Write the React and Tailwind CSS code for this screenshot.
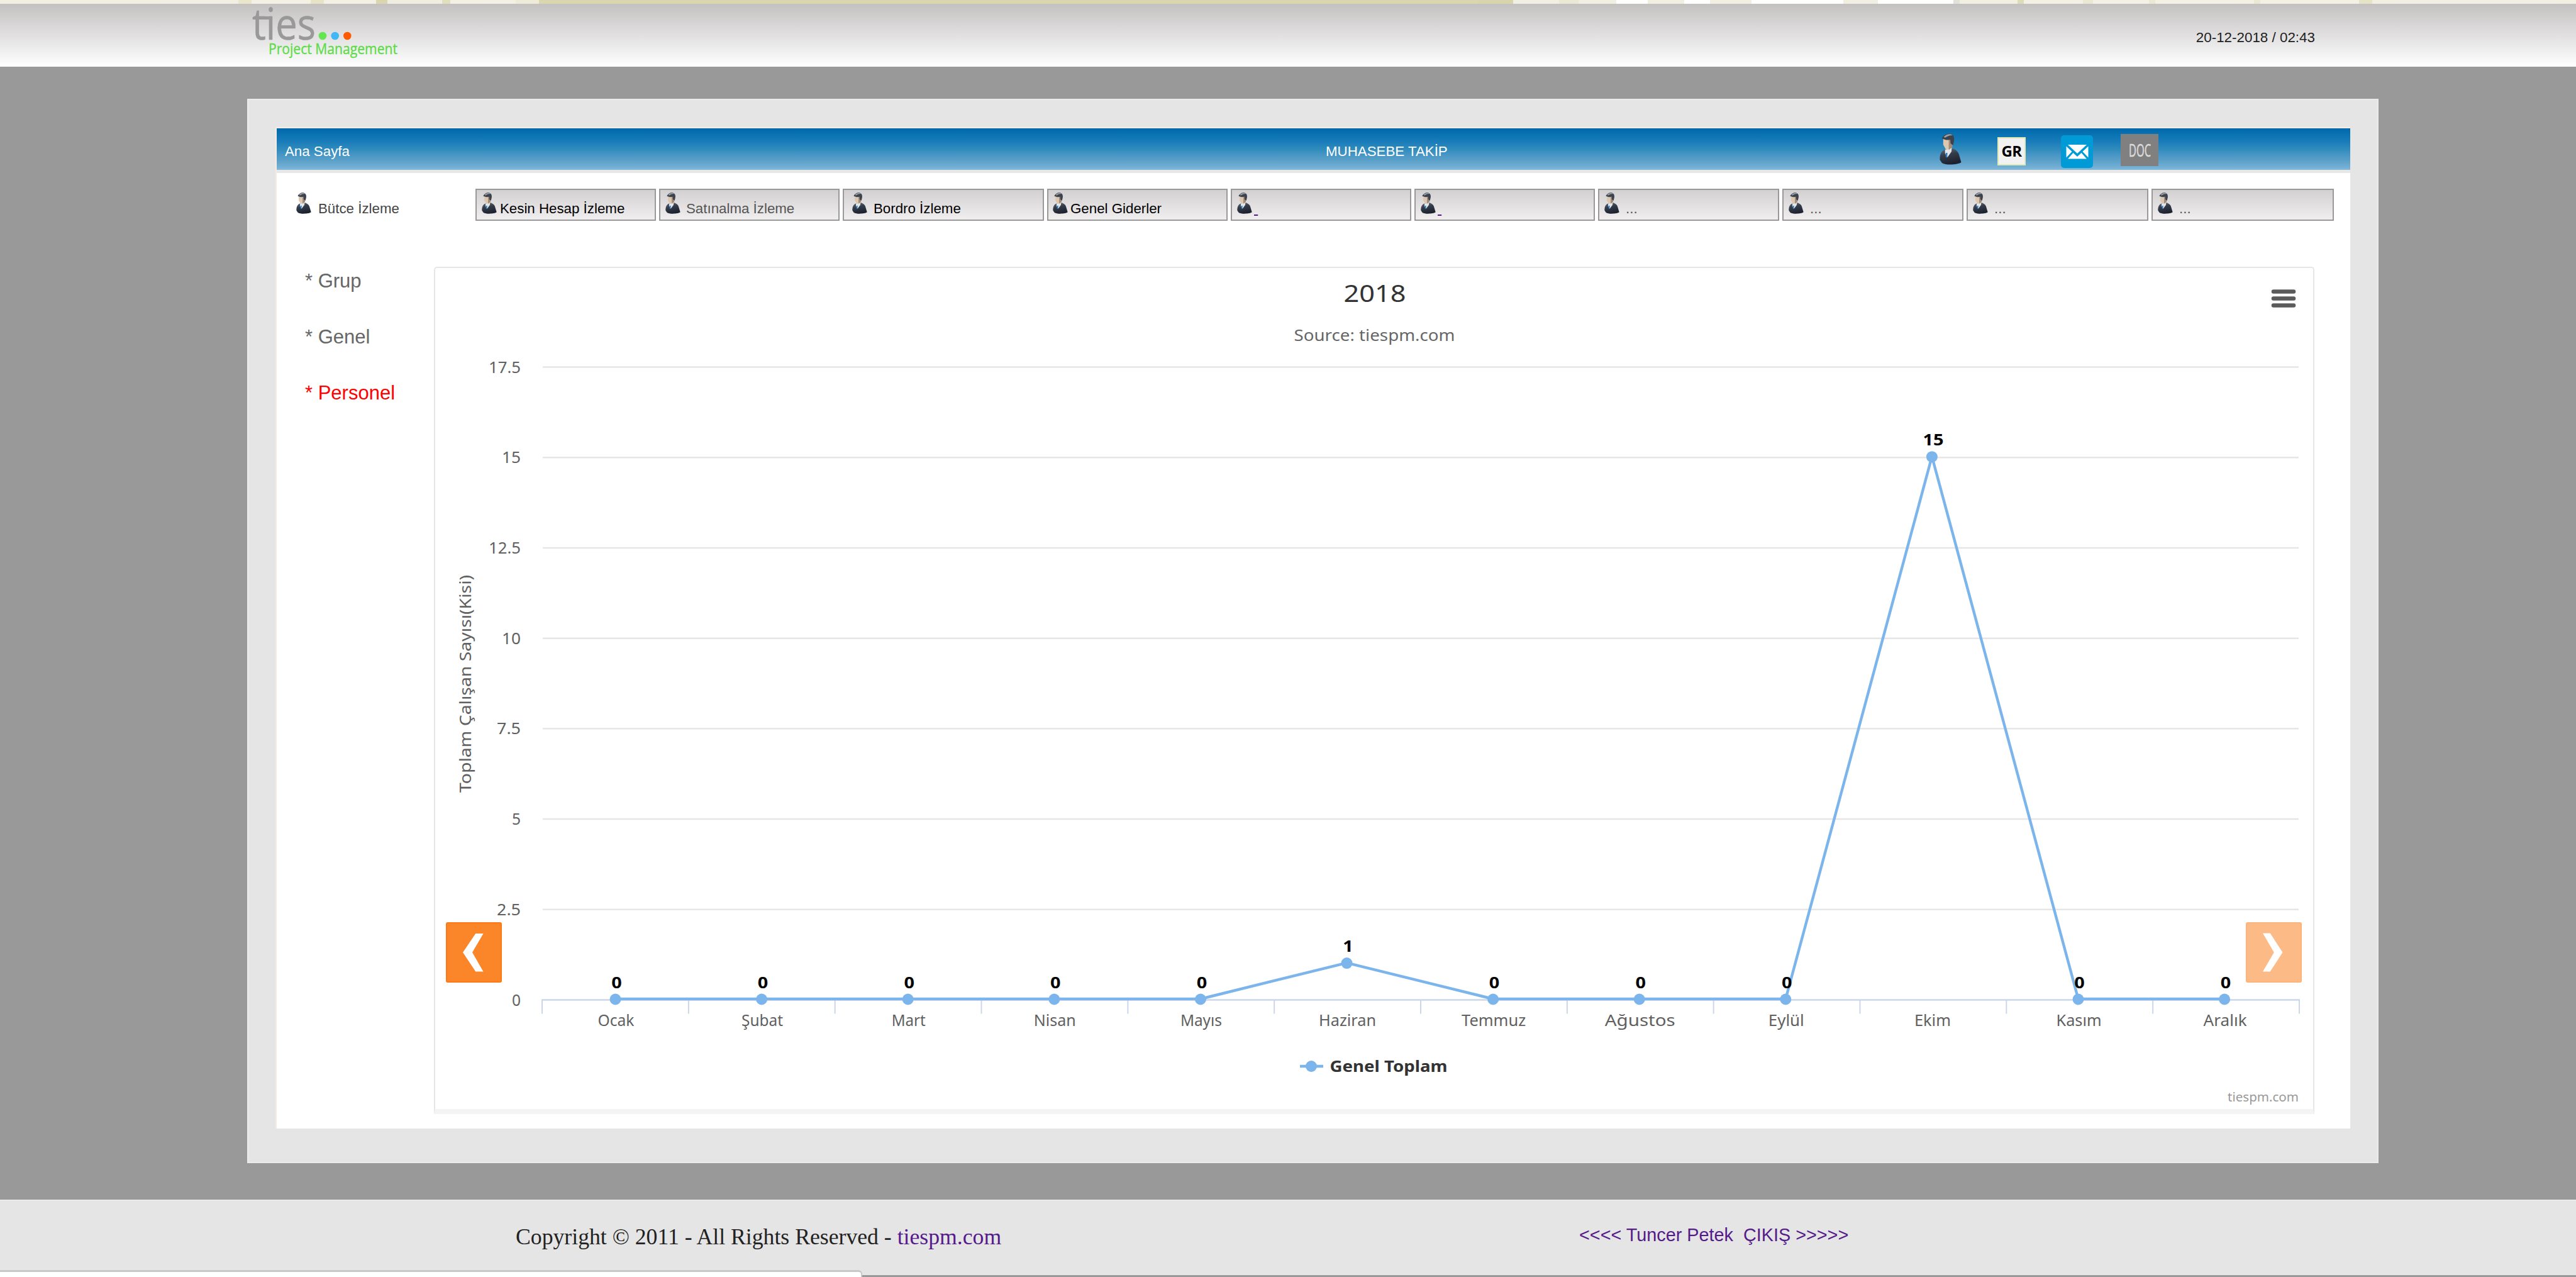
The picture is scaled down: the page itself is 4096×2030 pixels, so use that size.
import { Fragment } from 'react';

// Thin strip of the wallpaper above the header: [width, colour]
const strip = [
  [145, '#f1efe1'],
  [8, '#e9e6cc'],
  [36, '#f3f1e4'],
  [8, '#e6e3c6'],
  [32, '#f3f1e4'],
  [7, '#dad6b0'],
  [33, '#f0eee0'],
  [5, '#e2dfbf'],
  [40, '#f3f1e4'],
  [14, '#eeebd8'],
  [572, '#dad6b0'],
  [21, '#d8d4ac'],
  [28, '#f1efe1'],
  [12, '#ebe8d3'],
  [23, '#f1efe1'],
  [19, '#ffffff'],
  [22, '#f1efe1'],
  [16, '#ffffff'],
  [25, '#f1efe1'],
  [56, '#ffffff'],
  [21, '#f1efe1'],
  [46, '#ffffff'],
  [4, '#e2e2d8'],
  [35, '#f1efe1'],
  [4, '#dfdcb9'],
  [36, '#f3f1e4'],
  [6, '#ebe8d3'],
  [34, '#f3f1e4'],
  [4, '#ebe8d3'],
  [60, '#f3f1e4'],
  [4, '#ebe8d3'],
  [60, '#f3f1e4'],
  [8, '#e6e3c6'],
  [124, '#f1efe1'],
];

const tabs = [
  { label: 'Kesin Hesap İzleme', box: 'w-[287px] pl-[8px]', gap: 'ml-[5px]', color: 'text-black' },
  { label: 'Satınalma İzleme', box: 'w-[287px] pl-[8px]', gap: 'ml-[9px]', color: 'text-[#555555]' },
  { label: 'Bordro İzleme', box: 'w-[320px] pl-[13px]', gap: 'ml-[10px]', color: 'text-black' },
  { label: 'Genel Giderler', box: 'w-[287px] pl-[7px]', gap: 'ml-[4px]', color: 'text-black' },
  { label: '\u00a0', box: 'w-[287px] pl-[8px]', gap: 'ml-[3px]', color: 'text-[#551a8b] underline' },
  { label: '\u00a0', box: 'w-[287px] pl-[8px]', gap: 'ml-[3px]', color: 'text-[#551a8b] underline' },
  { label: '...', box: 'w-[288px] pl-[8px]', gap: 'ml-[10px]', color: 'text-[#555555]' },
  { label: '...', box: 'w-[288px] pl-[8px]', gap: 'ml-[10px]', color: 'text-[#555555]' },
  { label: '...', box: 'w-[289px] pl-[8px]', gap: 'ml-[10px]', color: 'text-[#555555]' },
  { label: '...', box: 'w-[290px] pl-[8px]', gap: 'ml-[10px]', color: 'text-[#555555]' },
];

// name, value, label width
const months = [
  ['Ocak', 0, 58],
  ['Şubat', 0, 66],
  ['Mart', 0, 54],
  ['Nisan', 0, 67],
  ['Mayıs', 0, 66],
  ['Haziran', 1, 91],
  ['Temmuz', 0, 102],
  ['Ağustos', 0, 112],
  ['Eylül', 0, 57],
  ['Ekim', 15, 58],
  ['Kasım', 0, 72],
  ['Aralık', 0, 69],
];

const yLabels = [
  ['17.5', 51],
  ['15', 30],
  ['12.5', 51],
  ['10', 30],
  ['7.5', 38],
  ['5', 14],
  ['2.5', 38],
  ['0', 14],
];

const Person = ({ className }) => (
  <svg viewBox="0 0 36 50" preserveAspectRatio="none" className={className}>
    <defs>
      <linearGradient id="suit" x1="0" y1="0" x2="0.300" y2="1">
        <stop offset="0" stopColor="#68707c" />
        <stop offset="0.450" stopColor="#343c4a" />
        <stop offset="1" stopColor="#1d2230" />
      </linearGradient>
    </defs>
    <path d="M0.500 42C0.500 34 2 29 8 26L21 24C27 26 31 29 32.500 36L35.500 46C31 50 10 51 4 47Z" fill="url(#suit)" />
    <path d="M9 26L20 23L19.500 29L13 38L9 32Z" fill="#e4e7ea" />
    <path d="M10 31L13 31L12.500 39L10 37Z" fill="#2a7fc4" />
    <path d="M6 8L19 7L21 20L17 26L10 25L6 18Z" fill="#dcc8b0" />
    <path d="M15 10L21 10L21 22L15 26Z" fill="#a48d77" />
    <path d="M3.500 8C7 2 13 -1 19 1C24 3 24.500 8 23.500 13L22 19L18 16L17.500 10C12 11.500 8 10 3.500 8Z" fill="#3d434e" />
    <path d="M7 5.500C11 1 18 0 21.500 3C16 3 12 5 9 7Z" fill="#9aa0a8" />
  </svg>
);

const Logo = () => (
  <svg width="260" height="100" viewBox="393 6 260 100" className="overflow-visible" fontFamily="'Open Sans', sans-serif">
    <text x="401" y="62.500" fontSize="69" fill="#999999" stroke="#999999" strokeWidth="0.600" textLength="101" lengthAdjust="spacingAndGlyphs">
      ties
    </text>
    <rect x="403" y="26" width="30" height="5" fill="#999999" />
    <circle cx="513" cy="57" r="6.300" fill="#63e650" />
    <circle cx="532.700" cy="57" r="6.300" fill="#41b7f8" />
    <circle cx="552.300" cy="57" r="6.300" fill="#ff5a00" />
    <text x="427" y="85.500" fontSize="23.500" fill="#5fdc4a" stroke="#5fdc4a" strokeWidth="0.400" textLength="205" lengthAdjust="spacingAndGlyphs">
      Project Management
    </text>
  </svg>
);

const Chart = () => {
  const left = 172;
  const right = 2966;
  const top = 159.5;
  const bottom = 1165.5;
  const step = (right - left) / 12;
  const rowStep = (bottom - top) / 7;

  const px = (i) => 288.5 + 232.6 * i;
  const py = (v) => bottom - 1.5 - (v / 17.5) * (bottom - top);
  const line = months.map((m, i) => `${px(i)},${py(m[1])}`).join(' ');

  return (
    <svg width="2990" height="1347" viewBox="0 0 2990 1347" className="block" fontFamily="'Noto Sans', 'Open Sans', sans-serif">
      <text x="1496" y="55.500" fontSize="38" fill="#333333" textAnchor="middle" textLength="99" lengthAdjust="spacingAndGlyphs">
        2018
      </text>
      <text x="1495.500" y="117.500" fontSize="25.500" fill="#666666" textAnchor="middle" textLength="256" lengthAdjust="spacingAndGlyphs">
        Source: tiespm.com
      </text>

      {/* Menu button */}
      {[39.5, 50.5, 61.5].map((y) => (
        <line key={y} x1="2925" x2="2957" y1={y} y2={y} stroke="#5b5b5b" strokeWidth="6.500" strokeLinecap="round" />
      ))}

      {/* Y axis */}
      {yLabels.map(([label, width], i) => (
        <Fragment key={label}>
          {label !== '0' && (
            <line x1={left + 1} x2={right - 1} y1={top + rowStep * i} y2={top + rowStep * i} stroke="#e6e6e6" strokeWidth="2.500" />
          )}
          <text x="138" y={top + rowStep * i + 9} fontSize="24.500" fill="#606060" textAnchor="end" textLength={width} lengthAdjust="spacingAndGlyphs">
            {label}
          </text>
        </Fragment>
      ))}
      <text transform="translate(59 663) rotate(-90)" fontSize="25.500" fill="#606060" textAnchor="middle" textLength="346" lengthAdjust="spacingAndGlyphs">
        Toplam Çalışan Sayısı(Kisi)
      </text>

      {/* X axis */}
      <line x1={left - 1} x2={right + 1} y1={bottom} y2={bottom} stroke="#ccd6eb" strokeWidth="2.500" />
      {Array.from({ length: 13 }, (_, i) => (
        <line key={i} x1={left + step * i} x2={left + step * i} y1={bottom} y2={bottom + 22} stroke="#ccd6eb" strokeWidth="2" />
      ))}
      {months.map(([name, , width], i) => (
        <text key={name} x={px(i) + 1} y="1206.500" fontSize="24.500" fill="#606060" textAnchor="middle" textLength={width} lengthAdjust="spacingAndGlyphs">
          {name}
        </text>
      ))}

      {/* Series */}
      <polyline points={line} fill="none" stroke="#7cb5ec" strokeWidth="4.400" strokeLinejoin="round" />
      {months.map(([name, value], i) => (
        <circle key={name} cx={px(i)} cy={py(value) + 0.5} r="9" fill="#7cb5ec" />
      ))}
      {months.map(([name, value], i) => (
        <text
          key={name}
          x={px(i) + 2}
          y={py(value) - 17.5}
          fontSize="24.500"
          fontWeight="700"
          fill="#000000"
          textAnchor="middle"
          textLength={value > 9 ? 33 : 16.5}
          lengthAdjust="spacingAndGlyphs"
        >
          {value}
        </text>
      ))}

      {/* Legend */}
      <line x1="1377" x2="1414" y1="1271" y2="1271" stroke="#7cb5ec" strokeWidth="4.400" />
      <circle cx="1395" cy="1271" r="9" fill="#7cb5ec" />
      <text x="1424.500" y="1280" fontSize="25.500" fontWeight="700" fill="#333333" textLength="187" lengthAdjust="spacingAndGlyphs">
        Genel Toplam
      </text>

      <text x="2965" y="1327" fontSize="20" fill="#999999" textAnchor="end" textLength="113" lengthAdjust="spacingAndGlyphs">
        tiespm.com
      </text>
    </svg>
  );
};

export default function App() {
  return (
    <div className="relative flex h-[2030px] w-[4096px] flex-col overflow-hidden bg-[#999999] font-['Liberation_Sans',Arial,sans-serif] text-[22.300px]">
      <div className="flex h-[6px] w-full shrink-0">
        {strip.map(([width, color], i) => (
          <div key={i} style={{ flexGrow: width, backgroundColor: color }} />
        ))}
      </div>

      {/* Header */}
      <header className="flex h-[100px] shrink-0 items-center justify-between bg-linear-to-b from-[#c4c1c1] to-white pr-[415px] pl-[393px]">
        <Logo />
        <div className="pt-[8px] text-[22.400px] text-[#222222]">20-12-2018 / 02:43</div>
      </header>

      <main className="mt-[51px] ml-[393px] h-[1692px] w-[3389px] shrink-0 border-2 border-[#ebebeb] bg-[#e5e5e5] px-[43px] pt-[43px]">
        <div className="w-[3299px] border-t-2 border-l-2 border-[#f3ebe7]">
          {/* Menu bar */}
          <div className="flex h-[66px] items-center bg-[linear-gradient(#0067aa,#0a73b2_15%,#1a7cba_32%,#328dbd_52%,#4896c6_64%,#5ba1c8_78%,#6eabd2_90%,#7fb8d8)] text-white">
            <div className="w-[1668px] pt-[8px] pl-[13px]">Ana Sayfa</div>
            <div className="w-[976px] pt-[8px]">MUHASEBE TAKİP</div>
            <Person className="h-[50px] w-[35px]" />
            <div className="mt-[6px] ml-[57px] flex h-[45px] w-[45px] items-center justify-center border-2 border-[#dfe9b4] bg-[#f2f2f2] font-['Open_Sans',sans-serif] text-[24px] font-bold tracking-tight text-black">
              GR
            </div>
            <svg width="51" height="52" viewBox="0 0 51 52" className="mt-[7px] ml-[56px]">
              <rect width="51" height="52" rx="5" fill="#009bd7" />
              <path d="M11 15H41L26 29Z" fill="#ffffff" />
              <path d="M8.500 17.500L17.500 26L8.500 35.500ZM43.500 17.500L34.500 26L43.500 35.500Z" fill="#ffffff" />
              <path d="M19.500 28L26 34L32.500 28L41 37.500H11Z" fill="#ffffff" />
            </svg>
            <div className="mt-[3px] ml-[44px] flex h-[51px] w-[60px] items-center justify-center bg-[#808080] pt-[4px]">
              <svg width="35" height="26" viewBox="0 0 35 26" className="overflow-visible" fontFamily="'Open Sans', sans-serif">
                <text x="0" y="21" fontSize="27" fill="#dcdcdc" stroke="#dcdcdc" strokeWidth="0.600" textLength="35" lengthAdjust="spacingAndGlyphs">
                  DOC
                </text>
              </svg>
            </div>
          </div>
          <div className="h-[5px] bg-[#e8e6e6]" />

          <div className="h-[1519px] bg-white pt-[25px]">
            {/* Tabs */}
            <div className="flex h-[51px]">
              <div className="flex w-[316px] pt-[6px] pl-[31px]">
                <Person className="h-[34px] w-[24px]" />
                <span className="mt-[9px] ml-[11px] leading-[34px] text-[#444444]">Bütce İzleme</span>
              </div>
              <div className="flex gap-[5px]">
                {tabs.map((tab, i) => (
                  <div key={i} className={`flex h-[51px] border-2 border-[#999999] bg-linear-to-b from-[#d2d0d0] to-[#f0eeee] pt-[4px] ${tab.box}`}>
                    <Person className="h-[34px] w-[24px] shrink-0" />
                    <span className={`mt-[9px] leading-[34px] whitespace-pre ${tab.gap} ${tab.color}`}>{tab.label}</span>
                  </div>
                ))}
              </div>
            </div>

            <div className="flex">
              <aside className="w-[250px] pt-[51px] pl-[45px] text-[31px] leading-[89px] text-[#666666]">
                <div>* Grup</div>
                <div>* Genel</div>
                <div className="text-[#ff0000]">* Personel</div>
              </aside>

              <section className="relative mt-[73px] h-[1347px] w-[2990px] rounded-t-[5px] border-x-2 border-t-2 border-b-8 border-[#e6e6e6] border-b-[#f4f4f4]">
                <div className="-mt-[2px] -ml-[2px] h-[1337px] w-[2990px] overflow-hidden">
                  <Chart />
                </div>
                <button className="absolute top-[1040px] left-[17px] h-[96px] w-[89px] rounded-[3px] border-2 border-[#fb7a17] bg-[#fb8629]">
                  <svg viewBox="2 2 85 92" className="h-full w-full">
                    <path d="M27 48L47.300 18H59.500L42 48L59.500 78.500H47.300Z" fill="#ffffff" />
                  </svg>
                </button>
                <button className="absolute top-[1040px] left-[2879px] h-[96px] w-[89px] rounded-[3px] border-2 border-[#fdb47b] bg-[#fcba87]">
                  <svg viewBox="2 2 85 92" className="h-full w-full">
                    <path d="M27 17.500H38.700L58.500 48L38.700 78.500H27L44.800 48Z" fill="#ffffff" />
                  </svg>
                </button>
              </section>
            </div>
          </div>
        </div>
      </main>

      {/* Footer */}
      <footer className="mt-[58px] flex h-[120px] shrink-0 border-t-2 border-[#ebebeb] bg-[#e5e5e5]">
        <div className="w-[2511px] pl-[820px] font-['Liberation_Serif',serif] text-[35.700px] leading-[115px] text-[#222222]">
          Copyright © 2011 - All Rights Reserved - <a className="text-[#551a8b]">tiespm.com</a>
        </div>
        <a className="text-[28.800px] leading-[109px] whitespace-pre text-[#551a8b]">{'<<<< Tuncer Petek  ÇIKIŞ >>>>>'}</a>
      </footer>

      {/* Browser status bubble */}
      <div className="absolute bottom-0 left-0 h-[11px] w-[1371px] rounded-tr-[6px] border-t-[3px] border-r-2 border-[#c8c8c8] bg-white" />
    </div>
  );
}
